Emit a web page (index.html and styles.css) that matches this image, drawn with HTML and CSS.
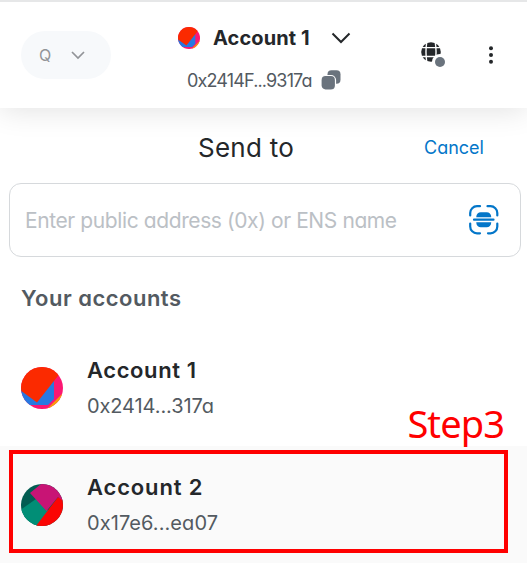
FILE: index.html
```html
<!DOCTYPE html>
<html lang="en">
<head>
<meta charset="utf-8">
<title>Send to</title>
<link rel="stylesheet" href="styles.css">
</head>
<body>
<header class="topbar">
  <button class="network"><span>Q</span>
    <svg width="14" height="9" viewBox="0 0 14 9"><path d="M1 1l6 6 6-6" fill="none" stroke="#929498" stroke-width="1.7"/></svg>
  </button>
  <div class="current">
    <div class="current-name">
      <svg class="avatar-sm" viewBox="0 0 42 42"><use href="#avatar1"/></svg>
      <span class="t-current">Account 1</span>
      <svg class="chevron" width="20" height="12" viewBox="0 0 20 12"><path d="M1.500 1.500l8.500 8.500 8.500-8.500" fill="none" stroke="#24272a" stroke-width="2"/></svg>
    </div>
    <div class="current-address">
      <span class="t-address">0x2414F...9317a</span>
      <svg width="20" height="20" viewBox="0 0 20 20"><rect x="6.500" y="0.300" width="13" height="13.500" rx="4" fill="#6a737d"/><rect x="0" y="5.500" width="14.500" height="14.500" rx="4.500" fill="#6a737d" stroke="#fff" stroke-width="1.200"/></svg>
    </div>
  </div>
  <div class="tools">
    <svg width="25" height="26" viewBox="0 0 25 26"><circle cx="10" cy="10" r="9.800" fill="#24272a"/><path d="M0 5.600h20M0 14.500h20M5.800 0C4.800 6 4.800 14 5.800 20M14.200 0c1 6 1 14 0 20" fill="none" stroke="#fff" stroke-width="1.400"/><circle cx="19" cy="20" r="8" fill="#fff"/><circle cx="19" cy="20" r="5" fill="#6a737d"/></svg>
    <svg width="6" height="18" viewBox="0 0 6 18" fill="#24272a"><circle cx="3" cy="2.200" r="2"/><circle cx="3" cy="9" r="2"/><circle cx="3" cy="15.800" r="2"/></svg>
  </div>
</header>
<main>
  <div class="heading"><h1>Send to</h1><a class="cancel">Cancel</a></div>
  <div class="search"><span class="placeholder">Enter public address (0x) or ENS name</span>
    <svg width="30" height="30" viewBox="0 0 30 30"><path d="M1.200 10.500V8A6.800 6.800 0 0 1 8 1.200h3M18.500 1.200h3A6.800 6.800 0 0 1 28.300 8v2.500M28.300 18.500v3a6.800 6.800 0 0 1-6.800 6.800h-2.500M11 28.300H8a6.800 6.800 0 0 1-6.800-6.800v-3M5 14.700h19.500" fill="none" stroke="#0376c9" stroke-width="2.200" stroke-linecap="round"/><path d="M7.300 12.200v-.5a4.500 4.500 0 0 1 4.500-4.500h5.900a4.500 4.500 0 0 1 4.500 4.500v.5zM7.300 17.200h14.900v.5a4.500 4.500 0 0 1-4.500 4.500h-5.900a4.500 4.500 0 0 1-4.500-4.500z" fill="#0376c9"/></svg>
  </div>
  <h2>Your accounts</h2>
  <ul class="accounts">
    <li>
      <svg class="avatar" viewBox="0 0 42 42">
        <defs><clipPath id="round"><circle cx="21" cy="21" r="21"/></clipPath></defs>
        <g id="avatar1" clip-path="url(#round)"><path fill="#fc1773" d="M0 0h42v42H0z"/><path fill="#f99e09" d="M42 26L26 42h16z"/><path fill="#2779e1" d="M0 20l33-8v20l-6 6H0z"/><path fill="#fb2a00" d="M0 0h42v2.500L16 35.500 0 23.700z"/></g>
      </svg>
      <div class="info"><strong>Account 1</strong><span class="short1">0x2414...317a</span></div>
    </li>
    <li class="selected">
      <svg class="avatar" viewBox="0 0 42 42"><g clip-path="url(#round)"><path fill="#025d52" d="M0 0h42v42H0z"/><path fill="#018e76" d="M0 25.500L15 15l14 13-14 16H0z"/><path fill="#fb0503" d="M37 13L15 42h27V15z"/><path fill="#c81475" d="M9 9L20 0h22v17l-5-4-11.500 14z"/></g></svg>
      <div class="info"><strong class="name2">Account 2</strong><span class="short2">0x17e6...ea07</span></div>
      <div class="callout"><span>Step3</span></div>
    </li>
  </ul>
</main>
</body>
</html>
```
FILE: styles.css
```css
* { box-sizing: border-box; }
body { margin: 0; height: 566px; overflow: hidden; background: #fff; color: #24272a; font-family: Inter, "Liberation Sans", sans-serif; font-feature-settings: "cv11"; white-space: nowrap; }
svg { display: block; flex: none; }
h1, h2, ul { margin: 0; padding: 0; font-weight: 400; }
.topbar { height: 108px; border-top: 2px solid #e6e7e8; display: grid; grid-template-columns: 177px 1fr 106px; box-shadow: 0 2px 28px rgba(0,0,0,.12); }
.network { margin: 29px 0 0 21px; width: 90px; height: 48px; border: 0; border-radius: 24px; background: #f7f9fb; color: #929498; display: flex; align-items: center; padding: 0 0 0 18px; gap: 20px; font: 16px Inter, sans-serif; }
.current { padding-top: 22px; }
.current-name { display: flex; align-items: center; height: 27px; }
.avatar-sm { width: 22px; height: 22px; margin: 0 13px 0 1px; }
.t-current { font-size: 20px; font-weight: 700; width: 98px; letter-spacing: .1px; }
.chevron { margin-left: 20px; }
.current-address { display: flex; align-items: center; height: 24px; margin: 17px 0 0 10px; }
.t-address { font-size: 18px; color: #535a61; width: 134px; letter-spacing: -.85px; }
.tools { display: flex; gap: 42px; padding-top: 40px; }
.tools svg + svg { margin-top: 4px; }
.heading { height: 75px; display: grid; grid-template-columns: 424px 1fr; align-items: center; padding-top: 4px; }
h1 { font-size: 26px; padding-left: 198px; letter-spacing: .25px; }
.cancel { font-size: 18px; color: #0376c9; }
.search { height: 74px; margin: 0 6px 0 9px; border: 1px solid #d6d9dc; border-radius: 12px; display: flex; align-items: center; justify-content: space-between; padding: 0 21px 0 15px; }
.placeholder { color: #bbc0c5; font-size: 21px; letter-spacing: -.4px; }
h2 { height: 72px; padding: 27px 0 0 21px; font-size: 22px; font-weight: 600; line-height: 28px; color: #535a61; letter-spacing: .5px; }
.accounts { list-style: none; }
.accounts li { position: relative; height: 117px; display: flex; align-items: center; padding-left: 21px; }
.avatar { width: 42px; height: 42px; }
.info { margin-left: 24px; display: flex; flex-direction: column; gap: 8px; }
.info strong { font-size: 22px; line-height: 28px; font-weight: 600; letter-spacing: .6px; }
.info .name2 { letter-spacing: .85px; }
.info span { font-size: 20px; line-height: 28px; color: #535a61; letter-spacing: -.1px; }
.info .short2 { letter-spacing: .08px; }
.selected { background: #fafafa; }
.callout { position: absolute; left: 9px; top: 4px; width: 499px; height: 103px; border: 4px solid #f00; }
.callout span { position: absolute; right: 0; top: -56px; font: 38px/50px "Noto Sans", sans-serif; letter-spacing: -.9px; color: #f00; }
```
